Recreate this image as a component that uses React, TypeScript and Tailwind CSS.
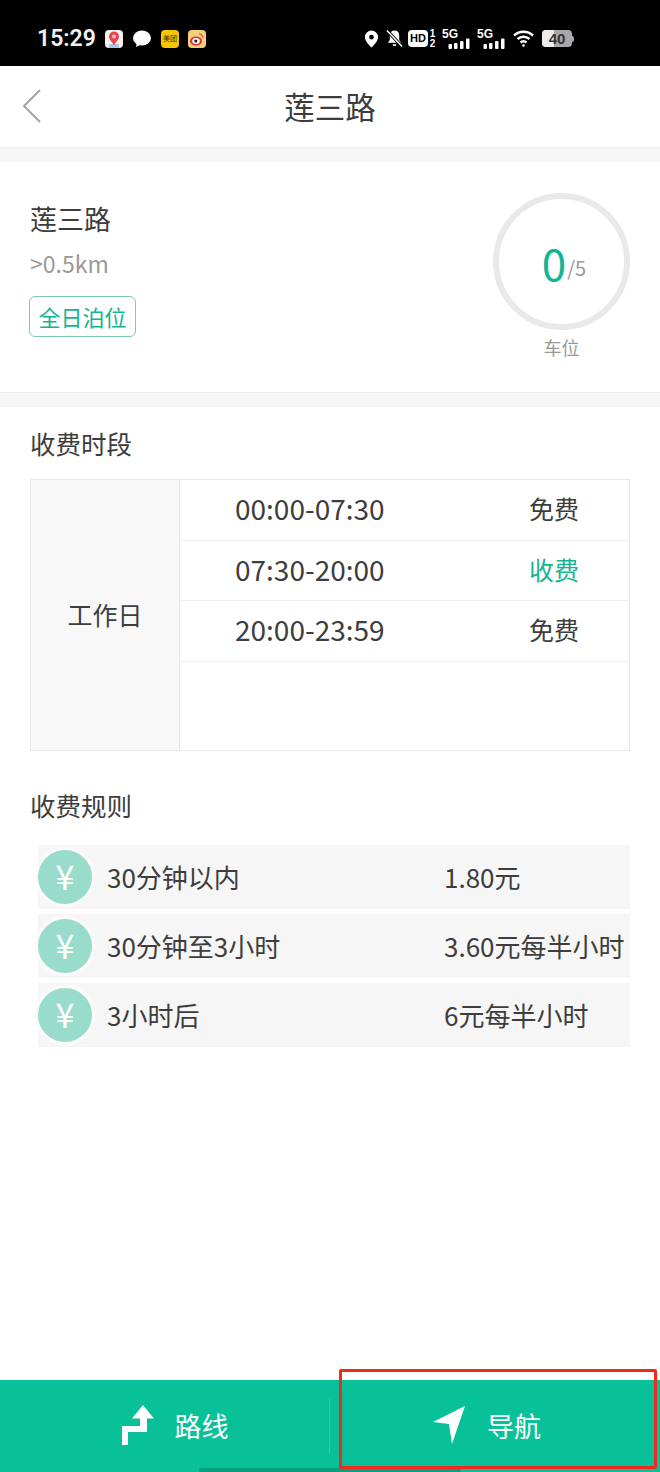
import { Fragment } from 'react';

const FEE_SLOTS = [
  { time: '00:00-07:30', label: '免费', paid: false },
  { time: '07:30-20:00', label: '收费', paid: true },
  { time: '20:00-23:59', label: '免费', paid: false },
];

const FEE_RULES = [
  { name: '30分钟以内', price: '1.80元' },
  { name: '30分钟至3小时', price: '3.60元每半小时' },
  { name: '3小时后', price: '6元每半小时' },
];

const FONT = '[font-family:"Noto_Sans_CJK_SC","Noto_Sans",sans-serif]';

function SignalBars() {
  return (
    <div className="relative h-[20px] w-[28px]">
      <span className="absolute left-0 top-0 text-[12px] leading-[11px] font-bold text-white [font-family:'Liberation_Sans',sans-serif]">5G</span>
      <svg className="absolute left-[6px] top-[9px]" width="22" height="11" viewBox="0 0 22 11" fill="#fff">
        <rect x="0.5" y="6" width="3.5" height="5" rx="1" />
        <rect x="6" y="5" width="3.5" height="6" rx="1" />
        <rect x="12" y="3" width="3.5" height="8" rx="1" />
        <rect x="18" y="0.5" width="3.5" height="10.500" rx="1" />
      </svg>
    </div>
  );
}

function StatusBar() {
  return (
    <div className="flex h-[66px] items-center bg-black pl-[37px] pr-[86px] pt-[11px]">
      <span className="w-[58px] text-[23px] leading-none font-semibold text-[#f2f2f2] [font-family:'Roboto',sans-serif]">15:29</span>
      <div className="ml-[10px] flex items-center gap-[9px]">
        <svg width="18" height="18" viewBox="0 0 18 18">
          <rect width="18" height="18" rx="4" fill="#f4f1ee" />
          <rect x="4" y="14" width="10" height="4" fill="#a9c6e6" />
          <path d="M9 1.5a5 5 0 0 1 5 5c0 3-3 5-5 9-2-4-5-6-5-9a5 5 0 0 1 5-5z" fill="#e8434f" />
          <circle cx="9" cy="6.5" r="2" fill="#f9c9c9" />
        </svg>
        <svg width="20" height="18" viewBox="0 0 20 18">
          <ellipse cx="10" cy="8" rx="9" ry="7.5" fill="#fff" />
          <path d="M5 12l-1 5 6-3z" fill="#fff" />
        </svg>
        <div className="flex h-[18px] w-[18px] items-center justify-center rounded-[4px] bg-[#f7c600] text-[7px] leading-none text-[#3a2d00]">
          美团
        </div>
        <svg width="18" height="18" viewBox="0 0 18 18">
          <rect width="18" height="18" rx="4" fill="#f3cf7f" />
          <ellipse cx="8" cy="11" rx="6" ry="4.6" fill="#e0302c" />
          <ellipse cx="8" cy="11" rx="3.8" ry="3" fill="#fff" />
          <circle cx="7.8" cy="11" r="1.6" fill="#222" />
          <path d="M11 4a4 4 0 0 1 4 4" stroke="#e0702c" strokeWidth="1.4" fill="none" />
        </svg>
      </div>
      <div className="ml-auto flex items-center">
        <svg width="15" height="18" viewBox="0 0 16 18">
          <path fillRule="evenodd" fill="#fff" d="M8 0a7 7 0 0 1 7 7c0 4-4 8-7 11-3-3-7-7-7-11a7 7 0 0 1 7-7zm0 4.500a2.500 2.500 0 1 0 0 5 2.500 2.500 0 0 0 0-5z" />
        </svg>
        <svg className="ml-[7px]" width="17" height="19" viewBox="0 0 18 19">
          <path fill="#fff" d="M9 1a5 5 0 0 1 5 5v5l2 3H2l2-3V6a5 5 0 0 1 5-5zM7 15.500h4a2 2 0 0 1-4 0z" />
          <path d="M1 1l16 17" stroke="#000" strokeWidth="3.400" />
          <path d="M1 1l16 17" stroke="#fff" strokeWidth="1.600" />
        </svg>
        <div className="ml-[5px] flex h-[17px] w-[20px] items-center justify-center rounded-[4px] bg-white text-[11px] leading-none font-bold text-black [font-family:'Liberation_Sans',sans-serif]">
          HD
        </div>
        <div className="ml-[1px] flex w-[7px] flex-col items-center text-[10px] leading-[10px] font-bold text-white [font-family:'Liberation_Sans',sans-serif]">
          <span>1</span>
          <span>2</span>
        </div>
        <div className="ml-[6px]">
          <SignalBars />
        </div>
        <div className="ml-[7px]">
          <SignalBars />
        </div>
        <svg className="ml-[8px]" width="22" height="17" viewBox="0 0 22 17" fill="none" stroke="#fff" strokeWidth="2.400">
          <path d="M1 5.500c5.500-5 13.500-5 19 0" />
          <path d="M4.500 9c3.500-3 8.500-3 12 0" />
          <path d="M7.500 12.500c1.800-1.500 4.200-1.500 6 0" />
          <circle cx="10.500" cy="15.500" r="1.300" fill="#fff" stroke="none" />
        </svg>
        <div className="ml-[7px] flex items-center">
          <div className="relative flex h-[17px] w-[30px] items-center justify-center overflow-hidden rounded-[4px] bg-[#a8a8a8]">
            <div className="absolute inset-y-0 left-0 w-[12px] bg-[#ececec]" />
            <span className="relative text-[15px] leading-none font-bold text-[#333] [font-family:'Liberation_Sans',sans-serif]">40</span>
          </div>
          <div className="h-[6px] w-[2px] rounded-r-sm bg-[#a8a8a8]" />
        </div>
      </div>
    </div>
  );
}

function Header() {
  return (
    <div className="relative flex h-[81px] items-center justify-center bg-white pb-[1px]">
      <svg className="absolute left-[22px] top-[23px]" width="20" height="34" viewBox="0 0 20 34" fill="none" stroke="#a3a3a3" strokeWidth="2">
        <path d="M18 1L2 17l16 16" />
      </svg>
      <h1 className="text-[30.500px] leading-none font-normal text-[#3d3d3d]">莲三路</h1>
    </div>
  );
}

function Band() {
  return <div className="h-[15px] border-t border-[#ececec] bg-[#f6f6f6]" />;
}

function ParkingCard() {
  return (
    <div className="flex h-[230px] bg-white pl-[30px] pr-[30px]">
      <div className="flex-1">
        <p className="mt-[38px] text-[27px] leading-[38px] text-[#3d3d3d]">莲三路</p>
        <p className="mt-[9px] text-[23px] leading-[32px] text-[#999]">&gt;0.5km</p>
        <span className="mt-[17px] ml-[-1px] flex h-[41px] w-[107px] items-center justify-center rounded-[6px] border border-[#7cc9b4] pb-[2px] text-[22px] leading-none text-[#14b492]">
          全日泊位
        </span>
      </div>
      <div className="flex w-[137px] flex-col items-center pt-[31px]">
        <div className="flex h-[137px] w-[137px] items-center justify-center rounded-full border-[6px] border-[#e9e9e9] pl-[5px]">
          <span className="text-[44px] leading-none text-[#14b492]">0</span>
          <span className="mt-[12px] ml-[1px] text-[20px] leading-none text-[#999]">/5</span>
        </div>
        <p className="mt-[5px] text-[18px] leading-[24px] text-[#999]">车位</p>
      </div>
    </div>
  );
}

function FeeTable() {
  return (
    <div className="mx-[30px] mt-[18px] flex h-[272px] border border-[#e8e8e8]">
      <div className="flex w-[149px] items-center justify-center border-r border-[#e8e8e8] bg-[#f8f8f8] text-[25px] text-[#3d3d3d]">
        工作日
      </div>
      <div className="flex-1">
        {FEE_SLOTS.map((slot) => (
          <div key={slot.time} className="flex h-[60.500px] items-center border-b border-[#efefef] pl-[55px] text-[#3d3d3d]">
            <span className="w-[294px] pb-[3px] text-[28px] leading-none">{slot.time}</span>
            <span className={slot.paid ? 'pb-[2px] text-[25px] leading-none text-[#14b492]' : 'pb-[2px] text-[25px] leading-none'}>{slot.label}</span>
          </div>
        ))}
      </div>
    </div>
  );
}

function FeeRules() {
  return (
    <div className="mt-[22px] ml-[38px] flex flex-col gap-[5px] mr-[30px]">
      {FEE_RULES.map((rule) => (
        <Fragment key={rule.name}>
          <div className="relative flex h-[64px] items-center bg-[#f6f6f6] pb-[2px] pl-[69px] text-[26px] text-[#3d3d3d]">
            <div className="absolute left-[-3px] top-[2px] flex h-[60px] w-[60px] items-center justify-center rounded-full border-[3px] border-[#fbfbfb] bg-[#9adccb] pb-[2px] text-[34px] leading-none text-white">
              ¥
            </div>
            <span className="w-[337px]">{rule.name}</span>
            <span>{rule.price}</span>
          </div>
        </Fragment>
      ))}
    </div>
  );
}

function BottomBar() {
  return (
    <div className="relative flex h-[92px] items-center bg-[#09c198]">
      <div className="flex w-[329px] items-center justify-center gap-[21px] pb-[2px] pl-[21px]">
        <svg width="32" height="40" viewBox="0 0 32 40" fill="#fff">
          <path d="M21 0l11 13.500h-7V27H6v13H0V21h18v-7.500h-8z" />
        </svg>
        <span className="text-[27px] leading-none text-white">路线</span>
      </div>
      <div className="h-[54px] w-px bg-[#2fcdaa]" />
      <div className="flex flex-1 items-center justify-center gap-[22px] pb-[2px] pr-[16px]">
        <svg width="32" height="38" viewBox="0 0 32 38" fill="#fff">
          <path d="M32 0L19 38l-3-20L0 16z" />
        </svg>
        <span className="text-[27px] leading-none text-white">导航</span>
      </div>
      <div className="absolute bottom-0 left-[199px] h-[4px] w-[262px] rounded-full bg-[#07a07f]" />
    </div>
  );
}

export default function App() {
  return (
    <div className={`relative flex h-[1472px] w-[660px] flex-col overflow-hidden bg-white ${FONT}`}>
      <StatusBar />
      <Header />
      <Band />
      <ParkingCard />
      <Band />
      <h2 className="mt-[18px] ml-[30px] text-[25.500px] leading-[36px] font-normal text-[#3d3d3d]">收费时段</h2>
      <FeeTable />
      <h2 className="mt-[36px] ml-[30px] text-[25.500px] leading-[36px] font-normal text-[#3d3d3d]">收费规则</h2>
      <FeeRules />
      <div className="flex-1" />
      <BottomBar />
      {/* red annotation box drawn over the screenshot */}
      <div className="absolute left-[339px] top-[1369px] h-[100px] w-[318px] rounded-[2px] border-[3px] border-[#f02a1f]" />
    </div>
  );
}
